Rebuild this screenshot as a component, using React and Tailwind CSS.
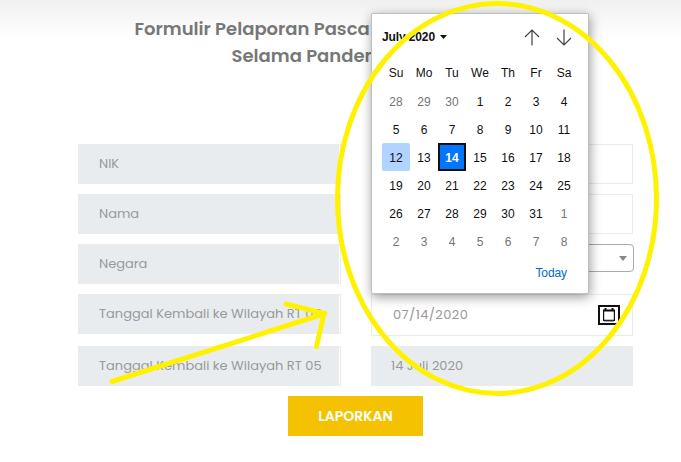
const DAYS = ['Su', 'Mo', 'Tu', 'We', 'Th', 'Fr', 'Sa'];
const DATES = [
  28, 29, 30, 1, 2, 3, 4,
  5, 6, 7, 8, 9, 10, 11,
  12, 13, 14, 15, 16, 17, 18,
  19, 20, 21, 22, 23, 24, 25,
  26, 27, 28, 29, 30, 31, 1,
  2, 3, 4, 5, 6, 7, 8,
];

function dayClass(i) {
  if (i === 14) return 'rounded-[2px] bg-[#b0d3ff] text-[#101010]';
  if (i === 16) return 'border-2 border-[#101010] bg-[#0075ff] font-bold text-white';
  if (i < 3 || i > 33) return 'text-[#757575]';
  return 'text-[#101010]';
}

function Label({ children }) {
  return (
    <div className="h-10 w-[263px] border border-[#ebebeb] pr-px">
      <div className="flex h-full items-center whitespace-nowrap bg-[#e8ecef] pl-5">{children}</div>
    </div>
  );
}

function Calendar() {
  return (
    <div className="absolute left-[371px] top-[13px] flex h-[281px] w-[218px] flex-col rounded-[2px] border border-[#bfbfbf] bg-white px-2.5 font-['Liberation_Sans',Arial,sans-serif] text-[12px] text-[#101010] shadow-[1px_3px_12px_rgba(0,0,0,0.4)]">
      <div className="flex h-[45px] items-center justify-between">
        <div className="flex items-center gap-[5px] whitespace-nowrap font-bold">
          <span className="tracking-[-0.12px]">July 2020</span>
          <svg width="7" height="4" viewBox="0 0 7 4"><path d="M0 0h7L3.5 4z" fill="#101010" /></svg>
        </div>
        <div className="mr-[6px] flex gap-4 pt-[2px]">
          <svg width="16" height="17" viewBox="0 0 16 17" fill="none" stroke="#444" strokeWidth="1.2"><path d="M8 16.5V1M1 8l7-7 7 7" /></svg>
          <svg width="16" height="17" viewBox="0 0 16 17" fill="none" stroke="#444" strokeWidth="1.2"><path d="M8 .5V16M1 9l7 7 7-7" /></svg>
        </div>
      </div>
      <div className="grid h-7 grid-cols-7 items-center text-center">
        {DAYS.map((d) => <div key={d}>{d}</div>)}
      </div>
      <div className="grid grid-cols-7">
        {DATES.map((d, i) => (
          <div key={i} className={`flex h-7 items-center justify-center pt-[2px] ${dayClass(i)}`}>{d}</div>
        ))}
      </div>
      <div className="mr-[11px] mt-[10px] text-right leading-4 tracking-[-0.1px] text-[#0067cb]">Today</div>
    </div>
  );
}

export default function App() {
  return (
    <div className="relative h-[462px] w-[681px] overflow-hidden bg-[linear-gradient(#f0f0f0,#fff_38px)] font-[Poppins,Inter,sans-serif] text-[13px] text-[#999]">
      <div className="h-36 whitespace-nowrap pt-[15px] text-[18px] font-semibold leading-[27px] text-[#777]">
        <div className="pl-[134.5px]">Formulir Pelaporan Pasca</div>
        <div className="pl-[231.5px]">Selama Pandemi</div>
      </div>
      <div className="flex gap-[30px] pl-[78px]">
        <div className="flex flex-col gap-2.5">
          <Label>NIK</Label>
          <Label>Nama</Label>
          <Label>Negara</Label>
          <Label>Tanggal Kembali ke Wilayah RT 05</Label>
          <div className="mt-[2px]"><Label>Tanggal Kembali ke Wilayah RT 05</Label></div>
        </div>
        <div className="flex flex-col gap-2.5">
          <div className="h-10 w-[262px] border border-[#ebebeb] bg-white" />
          <div className="h-10 w-[262px] border border-[#ebebeb] bg-white" />
          <div className="h-10 w-[263px]">
            <div className="flex h-7 items-center justify-end rounded border border-[#aaa] bg-white pr-[6px]">
              <svg width="8" height="5" viewBox="0 0 8 5"><path d="M0 0h8L4 5z" fill="#888" /></svg>
            </div>
          </div>
          <div className="flex h-[42px] w-[262px] items-center justify-between border border-[#ebebeb] bg-white pl-[21px] pr-[12px]">
            <span className="text-[13px] tracking-[0.4px]">07/14/2020</span>
            <div className="flex h-5 w-[22px] items-center justify-center border-2 border-[#101010]">
              <svg width="12" height="14" viewBox="0 0 12 14" fill="none" stroke="#101010">
                <path d="M.6 3v9.4h10.8V3" strokeWidth="1.2" />
                <path d="M0 2.5h12M2.5 0v3M9.5 0v3" strokeWidth="2" />
                <path d="M1 13.3h10" stroke="#888" />
              </svg>
            </div>
          </div>
          <div className="flex h-10 w-[262px] items-center border border-[#ebebeb] bg-[#e8ecef] pl-[19px]">14 Juli 2020</div>
        </div>
      </div>
      <button className="ml-[288px] mt-2.5 flex h-10 w-[135px] items-center justify-center bg-[#f4c200] text-[14px] font-semibold text-white">LAPORKAN</button>
      <Calendar />
      <svg className="absolute left-0 top-0" width="681" height="462" viewBox="0 0 681 462" fill="none" stroke="#fff200" strokeWidth="5">
        <ellipse cx="497" cy="198.5" rx="159.5" ry="195" />
        <path d="M112 381.5L325 313.5M286 304l38 9.5-7.5 33" strokeLinecap="round" strokeLinejoin="round" />
      </svg>
    </div>
  );
}
